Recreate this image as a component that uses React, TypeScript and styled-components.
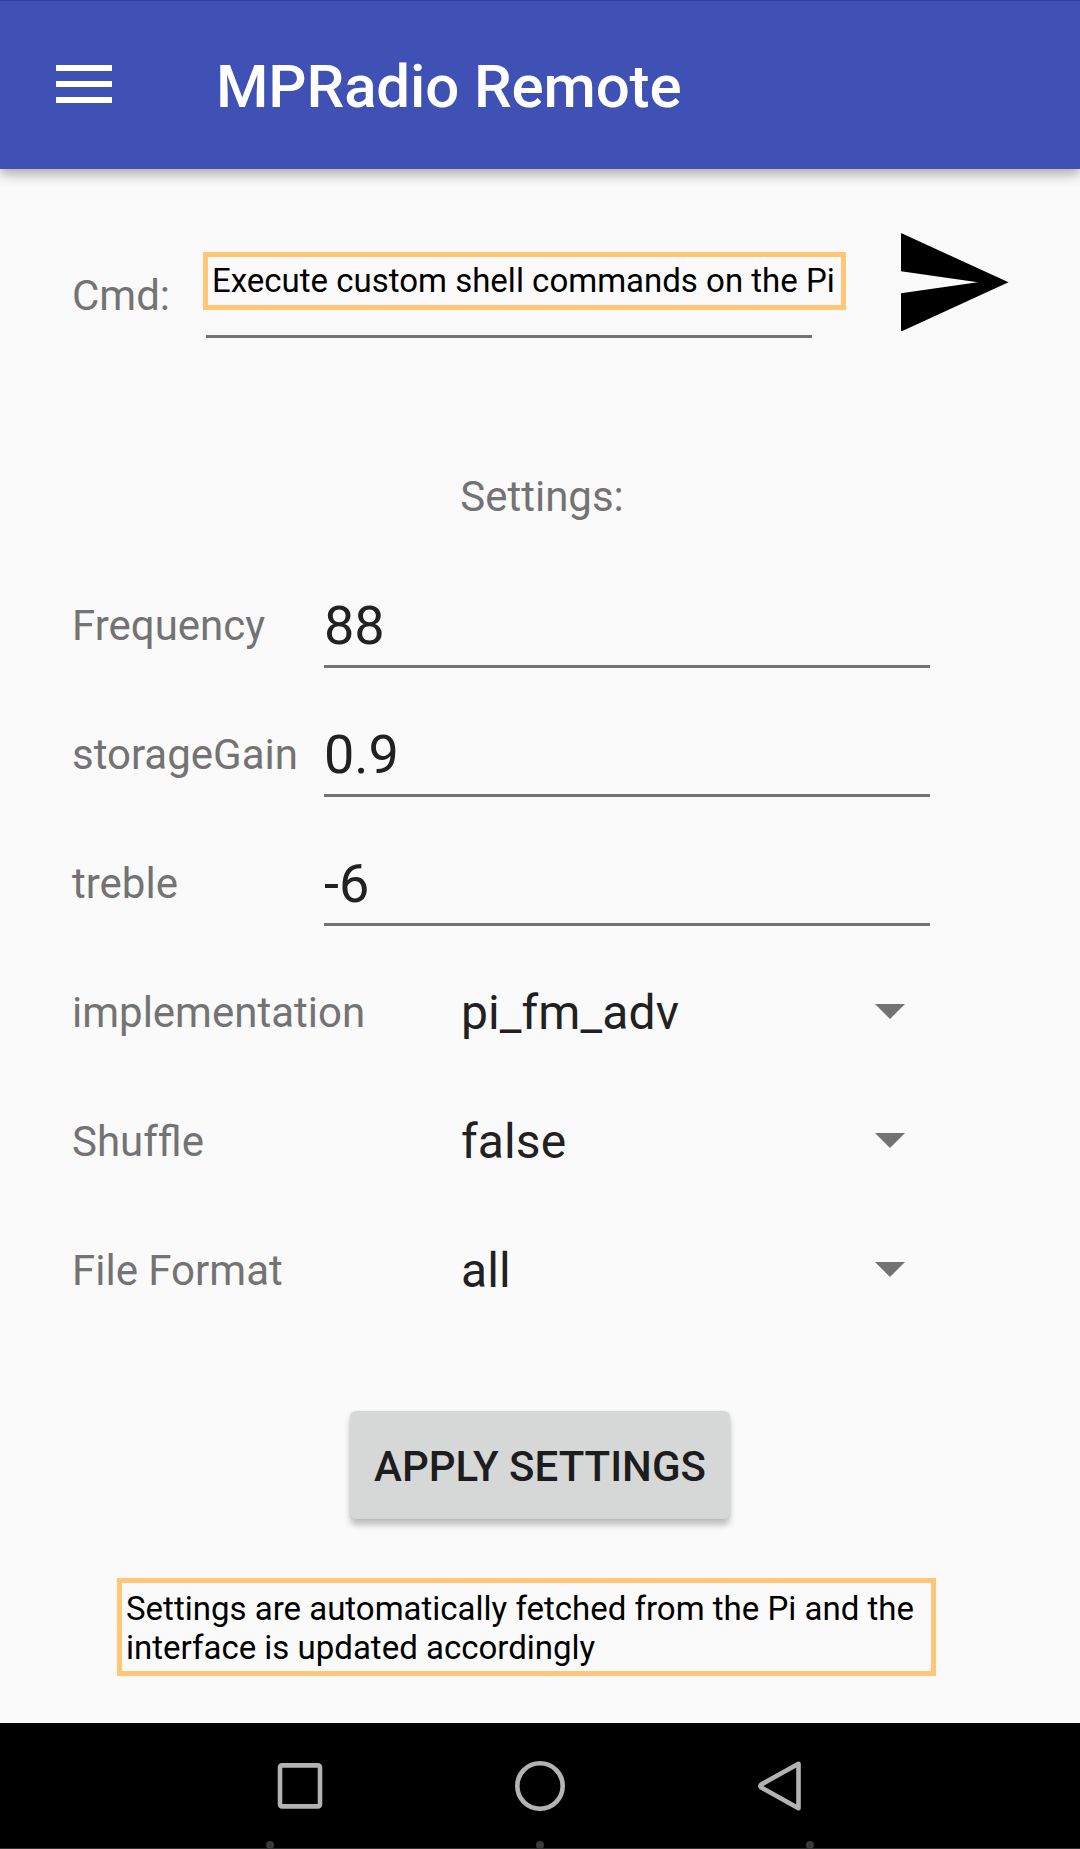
import React from "react";
import styled, { createGlobalStyle } from "styled-components";

const GlobalStyle = createGlobalStyle`
  *, *::before, *::after { box-sizing: border-box; }
  body {
    margin: 0;
    background: #fafafa;
    font-family: Roboto, "Liberation Sans", sans-serif;
  }
`;

const Screen = styled.div`
  display: flex;
  flex-direction: column;
  width: 1080px;
  height: 1849px;
  overflow: hidden;
  background: #fafafa;
`;

const AppBar = styled.header`
  display: flex;
  align-items: center;
  flex: none;
  height: 169px;
  padding-left: 56px;
  border-top: 1px solid #303f9f;
  background: #3f51b5;
  box-shadow: 0 5px 12px rgba(0, 0, 0, 0.33);
  z-index: 1;
`;

const MenuButton = styled.button`
  display: flex;
  flex-direction: column;
  gap: 10px;
  width: 56px;
  padding: 0;
  border: 0;
  margin-top: -2px;
  background: none;
`;

const MenuBar = styled.span`
  height: 6px;
  background: #fff;
`;

const Title = styled.h1`
  margin: 4px 0 0 104px;
  color: #fff;
  font-size: 60px;
  font-weight: 500;
  line-height: 70px;
  letter-spacing: -0.13px;
`;

const Main = styled.main`
  display: flex;
  flex-direction: column;
  flex: 1;
  padding-top: 62px;
`;

const Row = styled.div`
  display: flex;
  align-items: center;
  flex: none;
  height: 129px;
  padding-left: 72px;
`;

const Label = styled.label<{ $width: number }>`
  flex: none;
  width: ${(p) => p.$width}px;
  color: #737373;
  font-size: 42px;
  line-height: 49px;
  white-space: nowrap;
`;

const NoLigature = styled.span`
  font-variant-ligatures: none;
`;

const Field = styled.div`
  position: relative;
  display: flex;
  align-items: center;
  width: 606px;
  height: 85px;
  padding-top: 3px;
  border-bottom: 3px solid #737373;
  color: #212121;
  font-size: 54px;
  line-height: 79px;
`;

const FieldBox = styled.div`
  align-self: flex-start;
  padding-top: 22px;
`;

const Callout = styled.div`
  border: 5px solid #ffc677;
  background: #fafafa;
  color: #000;
  font-size: 33px;
  line-height: 39px;
  white-space: nowrap;
`;

const CommandHint = styled(Callout)`
  position: absolute;
  left: -3px;
  top: -1px;
  width: 643px;
  height: 58px;
  padding: 4px 0 0 4px;
`;

const SendButton = styled.button`
  display: flex;
  margin-left: 89px;
  margin-bottom: 27px;
  padding: 0;
  border: 0;
  background: none;
`;

const SectionTitle = styled.h2`
  margin: 112px 0 40px 4px;
  height: 49px;
  color: #737373;
  font-size: 42px;
  font-weight: 400;
  line-height: 49px;
  text-align: center;
`;

const Spinner = styled.div`
  display: flex;
  align-items: center;
  justify-content: space-between;
  width: 444px;
  color: #212121;
  font-size: 48px;
  line-height: 56px;
  letter-spacing: 0.1px;
`;

const Caret = styled.span`
  margin-bottom: 3px;
  border: 15px solid transparent;
  border-top-color: #737373;
  border-bottom: 0;
`;

const ApplyButton = styled.button`
  align-self: center;
  flex: none;
  width: 380px;
  height: 108px;
  margin-top: 76px;
  padding: 3px 0 0;
  border: 0;
  border-radius: 6px;
  background: #d6d7d7;
  box-shadow: 0 6px 6px rgba(0, 0, 0, 0.24), 0 0 3px rgba(0, 0, 0, 0.08);
  color: #1d1d1d;
  font-family: inherit;
  font-size: 42px;
  font-weight: 500;
  line-height: 49px;
  white-space: nowrap;
`;

const FetchNote = styled(Callout)`
  width: 819px;
  height: 98px;
  margin: 59px 0 0 117px;
  padding: 5.5px 0 0 4px;
`;

const NavBar = styled.nav`
  display: flex;
  flex-direction: column;
  flex: none;
  height: 126px;
  border-bottom: 1px solid #303030;
  background: #000;
`;

const NavRow = styled.div`
  display: grid;
  grid-template-columns: repeat(3, 240px);
  flex: none;
  justify-content: center;
  align-items: center;
  justify-items: center;
  height: 118px;
  padding-top: 8px;
`;

const HandleRow = styled.div`
  display: flex;
  flex: none;
  justify-content: space-between;
  width: 548px;
  margin: 0 auto;
`;

const Handle = styled.span`
  width: 8px;
  height: 8px;
  border-radius: 50%;
  background: #3a3a3a;
`;

const inputs = [
  { label: "Frequency", value: "88" },
  { label: "storageGain", value: "0.9" },
  { label: "treble", value: "-6" },
];

const spinners = [
  { id: "implementation", label: "implementation", value: "pi_fm_adv" },
  {
    id: "shuffle",
    label: (
      <>
        <NoLigature>Shuf</NoLigature>fle
      </>
    ),
    value: "false",
  },
  { id: "format", label: "File Format", value: "all" },
];

export default function App() {
  return (
    <>
      <GlobalStyle />
      <Screen>
        <AppBar>
          <MenuButton aria-label="Menu">
            <MenuBar />
            <MenuBar />
            <MenuBar />
          </MenuButton>
          <Title>MPRadio Remote</Title>
        </AppBar>
        <Main>
          <Row>
            <Label $width={134}>Cmd:</Label>
            <FieldBox>
              <Field>
                <CommandHint>Execute custom shell commands on the Pi</CommandHint>
              </Field>
            </FieldBox>
            <SendButton aria-label="Send">
              <svg width="107.5" height="98.6" viewBox="2 3 21 18" preserveAspectRatio="none">
                <path d="M2 21L23 12 2 3v7l15 2-15 2z" fill="#000" />
              </svg>
            </SendButton>
          </Row>
          <SectionTitle>Settings:</SectionTitle>
          {inputs.map((f) => (
            <Row key={f.label}>
              <Label $width={252}>{f.label}</Label>
              <Field>{f.value}</Field>
            </Row>
          ))}
          {spinners.map((s) => (
            <Row key={s.id}>
              <Label $width={389}>{s.label}</Label>
              <Spinner>
                {s.value}
                <Caret />
              </Spinner>
            </Row>
          ))}
          <ApplyButton>APPLY SETTINGS</ApplyButton>
          <FetchNote>
            Settings are automatically fetched from the Pi and the
            <br />
            interface is updated accordingly
          </FetchNote>
        </Main>
        <NavBar>
          <NavRow>
            <svg width="46" height="48" viewBox="0 0 46 48">
              <rect x="3" y="3.4" width="40" height="41" rx="2" fill="none" stroke="#b3b3b3" strokeWidth="4.6" />
            </svg>
            <svg width="50" height="50" viewBox="0 0 50 50">
              <circle cx="25" cy="25" r="22.7" fill="none" stroke="#b3b3b3" strokeWidth="4.6" />
            </svg>
            <svg width="44" height="50" viewBox="0 0 44 50">
              <path d="M40.5 2.8v44.4L3.3 26.6q-1.8-1.6 0-3.2z" fill="none" stroke="#b3b3b3" strokeWidth="4.6" strokeLinejoin="round" />
            </svg>
          </NavRow>
          <HandleRow>
            <Handle />
            <Handle />
            <Handle />
          </HandleRow>
        </NavBar>
      </Screen>
    </>
  );
}
